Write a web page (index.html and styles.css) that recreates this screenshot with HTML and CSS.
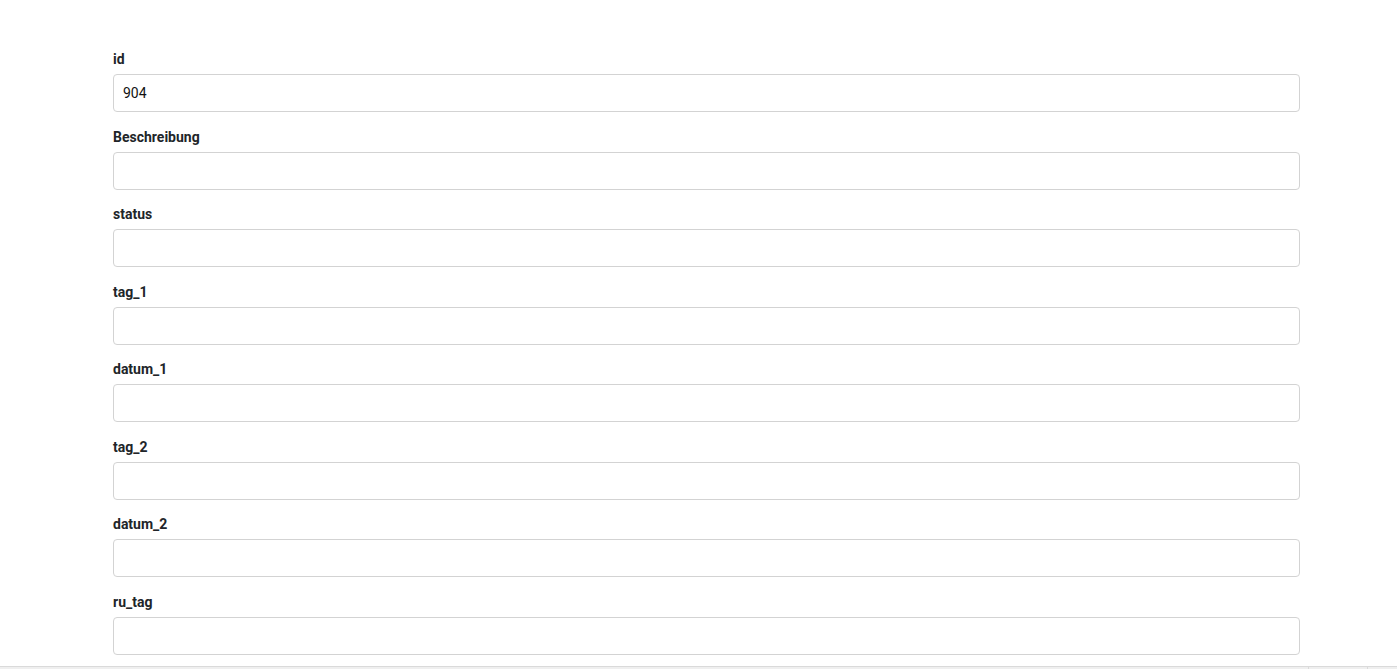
FILE: index.html
```html
<!DOCTYPE html>
<html lang="de">
<head>
<meta charset="utf-8">
<title>Formular</title>
<link rel="stylesheet" href="styles.css">
</head>
<body>
<main class="page">
  <form class="form">
    <div class="field"><label class="label">id</label><input class="input" type="text" value="904"></div>
    <div class="field"><label class="label">Beschreibung</label><input class="input" type="text"></div>
    <div class="field"><label class="label">status</label><input class="input" type="text"></div>
    <div class="field"><label class="label">tag_1</label><input class="input" type="text"></div>
    <div class="field"><label class="label">datum_1</label><input class="input" type="text"></div>
    <div class="field"><label class="label">tag_2</label><input class="input" type="text"></div>
    <div class="field"><label class="label">datum_2</label><input class="input" type="text"></div>
    <div class="field"><label class="label">ru_tag</label><input class="input" type="text"></div>
  </form>
  <div class="band">
    <div class="cell"></div>
    <div class="cell"></div>
    <div class="cell"></div>
  </div>
</main>
</body>
</html>
```
FILE: styles.css
```css
html, body {
  margin: 0;
  padding: 0;
  background: #ffffff;
  font-family: Roboto, "Liberation Sans", Arial, sans-serif;
  overflow: hidden;
}
.page {
  display: flex;
  flex-direction: column;
}
.form {
  display: flex;
  flex-direction: column;
  padding: 49px 97px 0 113px;
}
.field {
  display: flex;
  flex-direction: column;
  margin-bottom: 14.5px;
}
.label {
  font-size: 14px;
  line-height: 21px;
  font-weight: 700;
  color: #212529;
  margin-bottom: 4px;
}
.input {
  box-sizing: border-box;
  height: 38px;
  width: 100%;
  border: 1px solid #d3d3d3;
  border-radius: 4px;
  padding: 0 9px;
  font-family: Roboto, "Liberation Sans", Arial, sans-serif;
  font-size: 14px;
  color: #111;
  background: #fff;
  outline: none;
}
.band {
  display: grid;
  grid-template-columns: 1308px 59px 1fr;
  height: 20px;
  border-top: 1px solid #dadada;
  background: #efefef;
  margin-top: -3px;
}
.cell {
  border-left: 1px solid #dadada;
}
.cell:first-child {
  border-left: none;
}
```
